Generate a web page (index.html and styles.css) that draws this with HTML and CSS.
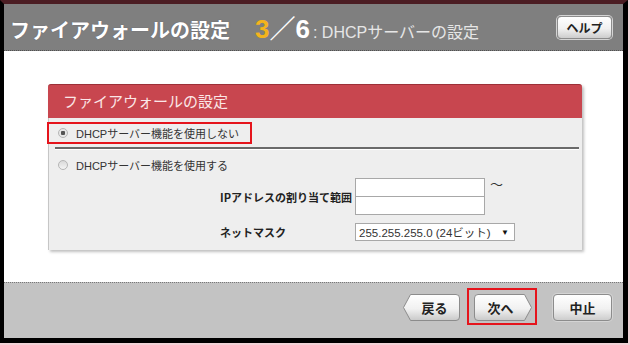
FILE: index.html
```html
<!DOCTYPE html>
<html lang="ja">
<head>
  <meta charset="UTF-8">
  <title>ファイアウォールの設定</title>
  <link rel="stylesheet" href="styles.css">
</head>
<body>
  <div class="frame">
    <div class="window">
      <header class="topbar">
        <div class="heading">
          <span class="title">ファイアウォールの設定</span>
          <span class="step"><span class="now">3</span>／6</span>
          <span class="sub">: DHCPサーバーの設定</span>
        </div>
        <button class="btn help">ヘルプ</button>
      </header>

      <main class="content">
        <section class="panel">
          <h2 class="panel-title">ファイアウォールの設定</h2>
          <div class="panel-body">
            <div class="choice mark"><span class="radio on"></span>DHCPサーバー機能を使用しない</div>
            <div class="rule"></div>
            <div class="choice"><span class="radio"></span>DHCPサーバー機能を使用する</div>

            <div class="fields">
              <div class="label">IPアドレスの割り当て範囲</div>
              <div class="range">
                <div class="range-row">
                  <input class="box" type="text">
                  <span class="tilde">〜</span>
                </div>
                <input class="box second" type="text">
              </div>
              <div class="label">ネットマスク</div>
              <div class="select">255.255.255.0 (24ビット)<span class="caret">▼</span></div>
            </div>
          </div>
        </section>
      </main>

      <footer class="bottombar">
        <button class="arrow back">
          <svg width="57" height="27" viewBox="0 0 57 27">
            <defs>
              <linearGradient id="g1" x1="0" y1="0" x2="0" y2="1">
                <stop offset="0" stop-color="#ffffff"/>
                <stop offset="0.55" stop-color="#f1f1f1"/>
                <stop offset="1" stop-color="#c9c9c9"/>
              </linearGradient>
            </defs>
            <path d="M7.5,0.5 H53 Q56.5,0.5 56.5,4 V23 Q56.5,26.5 53,26.5 H7.5 L0.5,13.5 Z" fill="url(#g1)" stroke="#8c8c8c"/>
          </svg>
          <span class="lbl">戻る</span>
        </button>
        <div class="mark-box">
          <button class="arrow next">
            <svg width="58" height="27" viewBox="0 0 58 27">
              <path d="M4,0.5 H50.5 L57.5,13.5 L50.5,26.5 H4 Q0.5,26.5 0.5,23 V4 Q0.5,0.5 4,0.5 Z" fill="url(#g1)" stroke="#8c8c8c"/>
            </svg>
            <span class="lbl">次へ</span>
          </button>
        </div>
        <button class="btn stop">中止</button>
      </footer>
    </div>
  </div>
</body>
</html>
```

FILE: styles.css
```css
body {
  margin: 0;
  background: #f2d3d7;
  font-family: "Liberation Sans", "Noto Sans CJK JP", sans-serif;
}

.frame {
  width: 628px;
  height: 343px;
  box-sizing: border-box;
  border-top: 4px solid #4b1d23;
  border-left: 4px solid #000;
  border-right: 5px solid #000;
  border-bottom: 5px solid #000;
}

.window {
  height: 100%;
  display: flex;
  flex-direction: column;
  background: #fff;
}

/* header */
.topbar {
  height: 46px;
  flex: none;
  display: flex;
  align-items: center;
  justify-content: space-between;
  padding: 0 11px 0 6px;
  background: #7f7f7f;
  border-bottom: 1px dotted #505050;
}

.heading {
  display: flex;
  align-items: baseline;
  padding-top: 4px;
  color: #fff;
}

.title {
  font-family: "Noto Sans CJK JP", sans-serif;
  font-size: 20px;
  font-weight: bold;
  text-shadow: 0 0 1px #556;
}

.step {
  margin-left: 25px;
  font-size: 26px;
  font-weight: bold;
  line-height: 1;
}

.now {
  color: #f4b41c;
}

.sub {
  margin-left: 3px;
  font-size: 16px;
  color: #e6e6e6;
}

.btn {
  font-family: "Noto Sans CJK JP", sans-serif;
  font-weight: bold;
  color: #222;
  background: linear-gradient(#ffffff, #f1f1f1 55%, #cdcdcd);
  border: 1px solid #8c8c8c;
  border-radius: 4px;
  box-shadow: 0 0 0 1px #d4d4d4;
  padding: 0;
  cursor: pointer;
}

.help {
  width: 55px;
  height: 23px;
  font-size: 12px;
}

/* main */
.content {
  flex: 1;
  padding: 33px 0 0 44px;
}

.panel {
  width: 534px;
  box-shadow: 2px 2px 3px rgba(0,0,0,0.25);
  border-radius: 3px 3px 0 0;
}

.panel-title {
  margin: 0;
  height: 33px;
  line-height: 32px;
  padding-left: 15px;
  font-family: "Noto Sans CJK JP", sans-serif;
  font-size: 15px;
  font-weight: normal;
  color: #fbe6e7;
  background: #c8464f;
  border-top: 1px solid #9c3038;
  border-radius: 3px 3px 0 0;
}

.panel-body {
  background: #eeeeee;
  border-left: 1px solid #c6c6c6;
  padding: 4px 3px 9px 0;
}

.choice {
  display: flex;
  align-items: center;
  height: 20px;
  padding-left: 9px;
  font-size: 11px;
  color: #333;
  white-space: nowrap;
}

.choice.mark {
  box-sizing: border-box;
  width: 205px;
  height: 22px;
  margin-left: -2px;
  border: 2px solid #e5141c;
}

.radio {
  flex: none;
  width: 10px;
  height: 10px;
  margin-right: 8px;
  box-sizing: border-box;
  border-radius: 50%;
  border: 1px solid #b5b5b5;
  background: linear-gradient(#d9d9d9, #f4f4f4);
}

.radio.on {
  background: radial-gradient(circle, #555 0 2px, #e6e6e6 2.5px);
}

.rule {
  height: 2px;
  margin: 3px 0 0 6px;
  background: #6a6a6a;
  border-bottom: 1px solid #fff;
}

.rule + .choice {
  margin-top: 5px;
}

.fields {
  display: grid;
  grid-template-columns: 135px auto;
  align-items: center;
  row-gap: 8px;
  margin: 3px 0 0 171px;
}

.label {
  font-family: "Noto Sans CJK JP", sans-serif;
  font-size: 11px;
  font-weight: bold;
  color: #222;
  white-space: nowrap;
}

.range-row {
  display: flex;
  align-items: flex-start;
}

.box {
  display: block;
  width: 130px;
  height: 19px;
  box-sizing: border-box;
  margin: 0;
  border: 1px solid #a8a8a8;
  background: #fff;
}

.box.second {
  margin-top: -1px;
}

.tilde {
  margin-left: 5px;
  font-size: 13px;
  line-height: 13px;
  color: #333;
}

.select {
  width: 160px;
  height: 18px;
  box-sizing: border-box;
  display: flex;
  align-items: center;
  justify-content: space-between;
  padding: 0 5px 0 3px;
  border: 1px solid #a8a8a8;
  background: #fff;
  font-size: 11.5px;
  color: #333;
  white-space: nowrap;
}

.caret {
  font-size: 8px;
  color: #111;
}

/* footer */
.bottombar {
  height: 44px;
  flex: none;
  display: flex;
  justify-content: flex-end;
  align-items: flex-start;
  padding: 11px 11px 0 0;
  background: #c3c3c3;
  border-top: 1px dotted #777;
}

.arrow {
  display: grid;
  padding: 0;
  border: 0;
  background: none;
  cursor: pointer;
}

.arrow svg,
.arrow .lbl {
  grid-area: 1 / 1;
}

.arrow .lbl {
  align-self: center;
  justify-self: center;
  font-family: "Noto Sans CJK JP", sans-serif;
  font-size: 13px;
  font-weight: bold;
  color: #222;
}

.back .lbl {
  padding-left: 6px;
}

.next .lbl {
  padding-right: 5px;
}

.mark-box {
  margin: -6px 0 0 7px;
  padding: 4px 3px 2px 5px;
  border: 2px solid #e5141c;
}

.stop {
  width: 59px;
  height: 27px;
  margin-left: 16px;
  font-size: 13px;
}
```
